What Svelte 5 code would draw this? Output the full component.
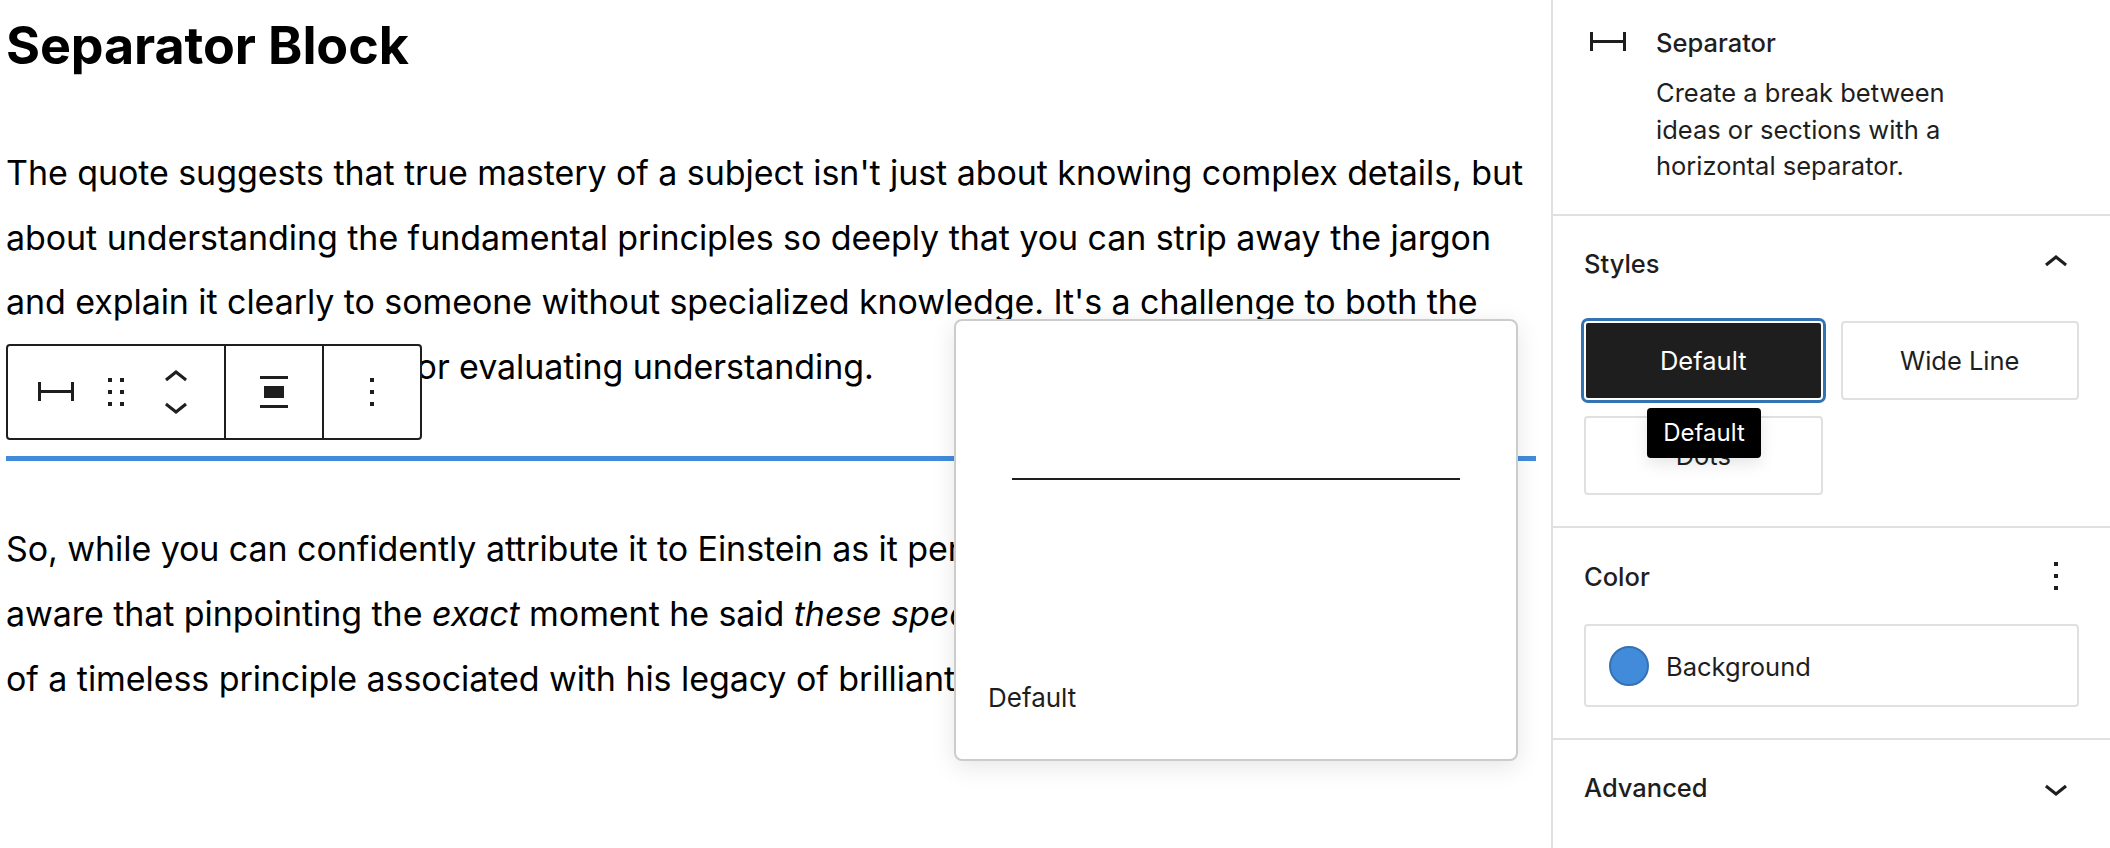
<script lang="ts">
	const separatorIcon = 'M4.5 12.5v4H3V7h1.5v3.987h15V7H21v9.5h-1.5v-4h-15Z';
	const dragIcon =
		'M8 7h2V5H8v2zm0 6h2v-2H8v2zm0 6h2v-2H8v2zm6-14v2h2V5h-2zm0 8h2v-2h-2v2zm0 6h2v-2h-2v2z';
	const chevronUp = 'M6.5 12.4L12 8l5.5 4.4-.9 1.2L12 10l-4.5 3.6-1-1.2z';
	const chevronDown = 'M17.5 11.6L12 16l-5.5-4.4.9-1.2L12 14l4.5-3.6 1 1.2z';
	const alignNone = 'M5 4h14v1.5H5zM5 18.5h14V20H5zM7 9h10v6H7z';
	const moreVertical = 'M13 19h-2v-2h2v2zm0-6h-2v-2h2v2zm0-6h-2V5h2v2z';
</script>

{#snippet icon(d: string)}
	<svg class="icon" viewBox="0 0 24 24" aria-hidden="true"><path {d} /></svg>
{/snippet}

<div class="page">
	<main class="editor">
		<h1>Separator Block</h1>
		<p>
			The quote suggests that true mastery of a subject isn't just about knowing complex details, but
			about understanding the fundamental principles so deeply that you can strip away the jargon
			and explain it clearly to someone without specialized knowledge. It's a challenge to both the
			explainer and a nice test for evaluating understanding.
		</p>
		<hr />
		<p>
			So, while you can confidently attribute it to Einstein as it perfectly captures his ideas, so be
			aware that pinpointing the <em>exact</em> moment he said <em>these specific words</em> is hard. It's an example
			of a timeless principle associated with his legacy of brilliant, clear thinking.
		</p>

		<div class="toolbar">
			<div class="group first">
				{@render icon(separatorIcon)}
				{@render icon(dragIcon)}
				<div class="mover">
					{@render icon(chevronUp)}
					{@render icon(chevronDown)}
				</div>
			</div>
			<div class="group">{@render icon(alignNone)}</div>
			<div class="group">{@render icon(moreVertical)}</div>
		</div>

		<div class="popover">
			<div class="preview"><div class="preview-line"></div></div>
			<div class="caption">Default</div>
		</div>
	</main>

	<aside class="sidebar">
		<section class="card">
			{@render icon(separatorIcon)}
			<div class="card-text">
				<div class="card-title">Separator</div>
				<div class="card-desc">Create a break between ideas or sections with a horizontal separator.</div>
			</div>
		</section>

		<section class="panel styles">
			<div class="panel-head">
				<span>Styles</span>
				{@render icon(chevronUp)}
			</div>
			<div class="style-grid">
				<div class="style-option">
					<button class="active">Default</button>
					<div class="tooltip">Default</div>
				</div>
				<button>Wide Line</button>
				<button>Dots</button>
			</div>
		</section>

		<section class="panel color">
			<div class="panel-head">
				<span>Color</span>
				{@render icon(moreVertical)}
			</div>
			<div class="color-row">
				<span class="swatch"></span>
				<span>Background</span>
			</div>
		</section>

		<section class="panel advanced">
			<div class="panel-head">
				<span>Advanced</span>
				{@render icon(chevronDown)}
			</div>
		</section>
	</aside>
</div>

<style>
	:global(body) {
		margin: 0;
		background: #fff;
		overflow: hidden;
	}

	.page {
		display: flex;
		width: 2110px;
		height: 848px;
		font-family: Inter, 'Liberation Sans', sans-serif;
		color: #1e1e1e;
	}

	.icon {
		display: block;
		flex: none;
		width: 48px;
		height: 48px;
		fill: #1e1e1e;
	}

	/* editor canvas */
	.editor {
		position: relative;
		flex: 1;
		padding: 0 15px 0 6px;
		color: #000;
	}

	h1 {
		margin: 0;
		padding-top: 10px;
		font-size: 52px;
		line-height: 72px;
		font-weight: 700;
		letter-spacing: -0.1px;
	}

	p {
		margin: 0;
		font-size: 34px;
		line-height: 64.6px;
		letter-spacing: -0.07px;
	}

	h1 + p {
		margin-top: 59px;
	}

	hr {
		margin: 57px 0 56px;
		height: 5px;
		border: 0;
		background: #428bdb;
	}

	.toolbar {
		position: absolute;
		left: 6px;
		top: 344px;
		display: flex;
		height: 96px;
		box-sizing: border-box;
		background: #fff;
		border: 2px solid #1e1e1e;
		border-radius: 4px;
		color: #1e1e1e;
	}

	.group {
		display: flex;
		align-items: center;
		padding: 0 24px;
	}

	.group + .group {
		border-left: 2px solid #1e1e1e;
	}

	.group.first {
		gap: 12px;
	}

	.mover {
		display: flex;
		flex-direction: column;
	}

	.mover .icon + .icon {
		margin-top: -20px;
	}

	.popover {
		position: absolute;
		left: 954px;
		top: 319px;
		width: 564px;
		height: 442px;
		box-sizing: border-box;
		background: #fff;
		border: 2px solid #ccc;
		border-radius: 8px;
		box-shadow: 0 6px 24px rgba(0, 0, 0, 0.1);
	}

	.preview {
		display: flex;
		align-items: center;
		height: 316px;
		padding: 0 56px;
	}

	.preview-line {
		flex: 1;
		height: 2px;
		background: #1e1e1e;
	}

	.caption {
		margin-top: 43px;
		padding-left: 32px;
		font-size: 26px;
		line-height: 36px;
		color: #1e1e1e;
	}

	/* settings sidebar */
	.sidebar {
		flex: none;
		width: 559px;
		box-sizing: border-box;
		border-left: 2px solid #e0e0e0;
		font-size: 25.5px;
		line-height: 36px;
	}

	.card {
		display: flex;
		gap: 24px;
		height: 216px;
		box-sizing: border-box;
		padding: 18px 32px 0 31px;
		border-bottom: 2px solid #e0e0e0;
	}

	.card-title {
		margin-top: 7px;
		font-weight: 500;
	}

	.card-desc {
		margin-top: 14px;
		width: 310px;
		line-height: 36.6px;
	}

	.panel {
		box-sizing: border-box;
		padding: 24px 31px 31px;
		border-bottom: 2px solid #e0e0e0;
	}

	.panel.styles {
		padding-top: 23px;
	}

	.panel.advanced {
		border-bottom: 0;
	}

	.panel-head {
		display: flex;
		align-items: center;
		justify-content: space-between;
		margin-right: -1px;
		font-weight: 500;
	}

	.panel-head span {
		padding-top: 2px;
	}

	.panel.advanced .panel-head span {
		padding-top: 0;
	}

	.style-grid {
		display: grid;
		grid-template-columns: 1fr 1fr;
		gap: 16px 18px;
		margin-top: 34px;
	}

	.style-option {
		position: relative;
	}

	button {
		display: block;
		width: 100%;
		height: 79px;
		box-sizing: border-box;
		padding: 1px 0 0;
		font: inherit;
		color: #1e1e1e;
		background: #fff;
		border: 2px solid #e0e0e0;
		border-radius: 4px;
	}

	button.active {
		color: #fff;
		background: #1e1e1e;
		border-color: #fff;
		box-shadow: 0 0 0 3px #3373b3;
	}

	.tooltip {
		position: absolute;
		left: 63px;
		top: 87px;
		display: flex;
		align-items: center;
		justify-content: center;
		width: 114px;
		height: 50px;
		font-size: 24px;
		color: #fff;
		background: #000;
		border-radius: 4px;
		box-shadow: 0 6px 16px rgba(0, 0, 0, 0.1);
	}

	.color-row {
		display: flex;
		align-items: center;
		gap: 17px;
		height: 83px;
		box-sizing: border-box;
		margin-top: 24px;
		padding: 2px 0 0 23px;
		border: 2px solid #e0e0e0;
		border-radius: 4px;
	}

	.swatch {
		width: 40px;
		height: 40px;
		margin-top: -2px;
		box-sizing: border-box;
		background: #428bdb;
		border: 2px solid #3373b3;
		border-radius: 50%;
	}
</style>
